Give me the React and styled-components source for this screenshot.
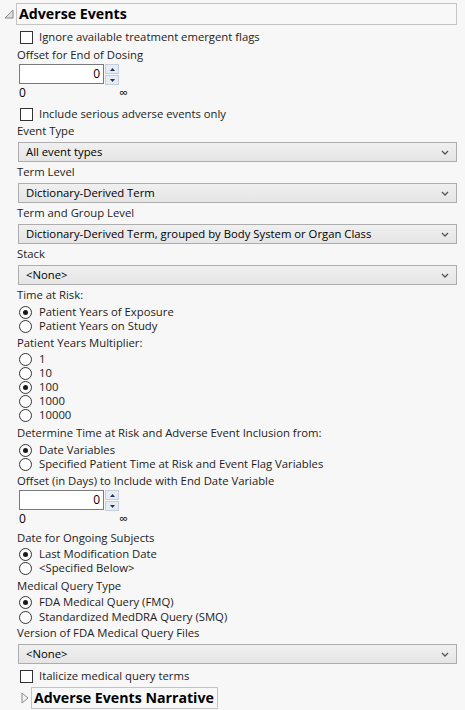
import React from "react"
import styled, { createGlobalStyle } from "styled-components"

const Global = createGlobalStyle`
  html, body {
    margin: 0;
    padding: 0;
    background: #f7f7f7;
  }
  body {
    font-family: "Segoe UI", "Open Sans", "Noto Sans", sans-serif;
    font-size: 11.3px;
    line-height: 16px;
    color: #1c1c1c;
  }
`

const Page = styled.div`
  width: 465px;
  height: 710px;
  overflow: hidden;
  padding-top: 3px;
  box-sizing: border-box;
`

const OutlineRow = styled.div`
  display: flex;
  align-items: center;
  margin-top: ${p => p.$mt || 0}px;
  padding-left: ${p => p.$indent || 4}px;
  gap: ${p => p.$gap || 2}px;
`

const TitleBox = styled.div`
  flex: ${p => (p.$grow ? 1 : "none")};
  margin-right: ${p => (p.$grow ? 8 : 0)}px;
  height: 20px;
  border: 1px solid #c4c4c4;
  background: #f8f8f8;
  display: flex;
  align-items: center;
  padding: 0 3px 0 2px;
  font-weight: 700;
  font-size: 14.2px;
  line-height: 20px;
  color: #000;
  white-space: nowrap;
`

const Body = styled.div`
  padding-left: 17px;
  display: flex;
  flex-direction: column;
`

const Label = styled.div`
  height: 16px;
  line-height: 16px;
  margin-top: ${p => p.$mt || 0}px;
  white-space: nowrap;
`

const CheckRow = styled.label`
  display: flex;
  align-items: center;
  height: 16px;
  line-height: 16px;
  margin-top: ${p => p.$mt || 0}px;
  padding-left: 3px;
  gap: 6px;
  white-space: nowrap;
`

const Box = styled.span`
  width: 11px;
  height: 11px;
  border: 1px solid #333;
  background: #fff;
  flex: none;
`

const RadioRow = styled.div`
  display: flex;
  align-items: center;
  height: 14px;
  line-height: 14px;
  margin-top: ${p => p.$mt || 0}px;
  padding-left: 2px;
  gap: 7px;
  white-space: nowrap;
`

const Circle = styled.span`
  width: 11px;
  height: 11px;
  border: 1px solid #333;
  border-radius: 50%;
  background: #fff;
  flex: none;
  display: flex;
  align-items: center;
  justify-content: center;
  &::after {
    content: "";
    width: 5px;
    height: 5px;
    border-radius: 50%;
    background: ${p => (p.$on ? "#1a1a1a" : "transparent")};
  }
`

const Select = styled.div`
  margin-top: ${p => p.$mt || 3}px;
  margin-left: 1px;
  margin-right: 8px;
  height: 18px;
  line-height: 18px;
  border: 1px solid #adadad;
  background: linear-gradient(#f0f0f0, #e5e5e5);
  display: flex;
  align-items: center;
  justify-content: space-between;
  padding: 0 7px 0 7px;
  white-space: nowrap;
  color: #000;
`

const Spin = styled.div`
  display: flex;
  margin-top: ${p => p.$mt || 1}px;
  margin-left: 2px;
  gap: 1px;
`

const NumBox = styled.div`
  width: 80px;
  height: 18px;
  border: 1px solid #7a7a7a;
  background: #fff;
  text-align: right;
  padding-right: 3px;
  line-height: 18px;
  font-size: 12px;
  color: #000;
`

const Arrows = styled.div`
  display: flex;
  flex-direction: column;
  gap: 1px;
`

const ArrowBtn = styled.div`
  width: 12px;
  height: 8px;
  border: 1px solid #c5cedb;
  background: #e6ecf4;
  display: flex;
  align-items: center;
  justify-content: center;
`

const Range = styled.div`
  display: flex;
  height: 16px;
  line-height: 16px;
  padding-left: 2px;
  font-size: 12px;
  color: #000;
  span:first-child {
    width: 100px;
  }
`

const Chevron = () => (
  <svg width="8" height="5" viewBox="0 0 8 5">
    <path d="M1 1 L4 4 L7 1" fill="none" stroke="#555" strokeWidth="1.3" />
  </svg>
)

const Tri = ({ open }) =>
  open ? (
    <svg width="10" height="10" viewBox="0 0 10 10">
      <path d="M9 1 L9 9 L1 9 Z" fill="#e0e0e0" stroke="#8a8a8a" strokeWidth="1" />
    </svg>
  ) : (
    <svg width="8" height="12" viewBox="0 0 8 12">
      <path d="M1 1 L7 6 L1 11 Z" fill="#f4f4f4" stroke="#8a8a8a" strokeWidth="1" />
    </svg>
  )

const Check = ({ children, mt }) => (
  <CheckRow $mt={mt}>
    <Box />
    {children}
  </CheckRow>
)

const Radio = ({ children, on, mt }) => (
  <RadioRow $mt={mt}>
    <Circle $on={on} />
    {children}
  </RadioRow>
)

const Dropdown = ({ value }) => (
  <Select>
    <span>{value}</span>
    <Chevron />
  </Select>
)

const Spinner = () => (
  <>
    <Spin>
      <NumBox>0</NumBox>
      <Arrows>
        <ArrowBtn>
          <svg width="5" height="3" viewBox="0 0 5 3"><path d="M0 3 L2.5 0 L5 3 Z" fill="#1f3550" /></svg>
        </ArrowBtn>
        <ArrowBtn>
          <svg width="5" height="3" viewBox="0 0 5 3"><path d="M0 0 L2.5 3 L5 0 Z" fill="#1f3550" /></svg>
        </ArrowBtn>
      </Arrows>
    </Spin>
    <Range>
      <span>0</span>
      <span>∞</span>
    </Range>
  </>
)

const App = () => (
  <Page>
    <Global />
    <OutlineRow>
      <Tri open />
      <TitleBox $grow>Adverse Events</TitleBox>
    </OutlineRow>
    <Body>
      <Check mt={4}>Ignore available treatment emergent flags</Check>
      <Label $mt={2}>Offset for End of Dosing</Label>
      <Spinner />
      <Check mt={5}>Include serious adverse events only</Check>
      <Label $mt={1}>Event Type</Label>
      <Dropdown value="All event types" />
      <Label $mt={2}>Term Level</Label>
      <Dropdown value="Dictionary-Derived Term" />
      <Label $mt={2}>Term and Group Level</Label>
      <Dropdown value="Dictionary-Derived Term, grouped by Body System or Organ Class" />
      <Label $mt={2}>Stack</Label>
      <Dropdown value="<None>" />
      <Label $mt={2}>Time at Risk:</Label>
      <Radio on mt={2}>Patient Years of Exposure</Radio>
      <Radio>Patient Years on Study</Radio>
      <Label $mt={2}>Patient Years Multiplier:</Label>
      <Radio mt={1}>1</Radio>
      <Radio>10</Radio>
      <Radio on>100</Radio>
      <Radio>1000</Radio>
      <Radio>10000</Radio>
      <Label $mt={3}>Determine Time at Risk and Adverse Event Inclusion from:</Label>
      <Radio on mt={2}>Date Variables</Radio>
      <Radio>Specified Patient Time at Risk and Event Flag Variables</Radio>
      <Label $mt={2}>Offset (in Days) to Include with End Date Variable</Label>
      <Spinner />
      <Label $mt={3}>Date for Ongoing Subjects</Label>
      <Radio on mt={1}>Last Modification Date</Radio>
      <Radio>&lt;Specified Below&gt;</Radio>
      <Label $mt={3}>Medical Query Type</Label>
      <Radio on mt={1}>FDA Medical Query (FMQ)</Radio>
      <Radio mt={1}>Standardized MedDRA Query (SMQ)</Radio>
      <Label $mt={1}>Version of FDA Medical Query Files</Label>
      <Dropdown value="<None>" />
      <Check mt={4}>Italicize medical query terms</Check>
    </Body>
    <OutlineRow $mt={3} $indent={21} $gap={2}>
      <Tri />
      <TitleBox>Adverse Events Narrative</TitleBox>
    </OutlineRow>
  </Page>
)

export default App
